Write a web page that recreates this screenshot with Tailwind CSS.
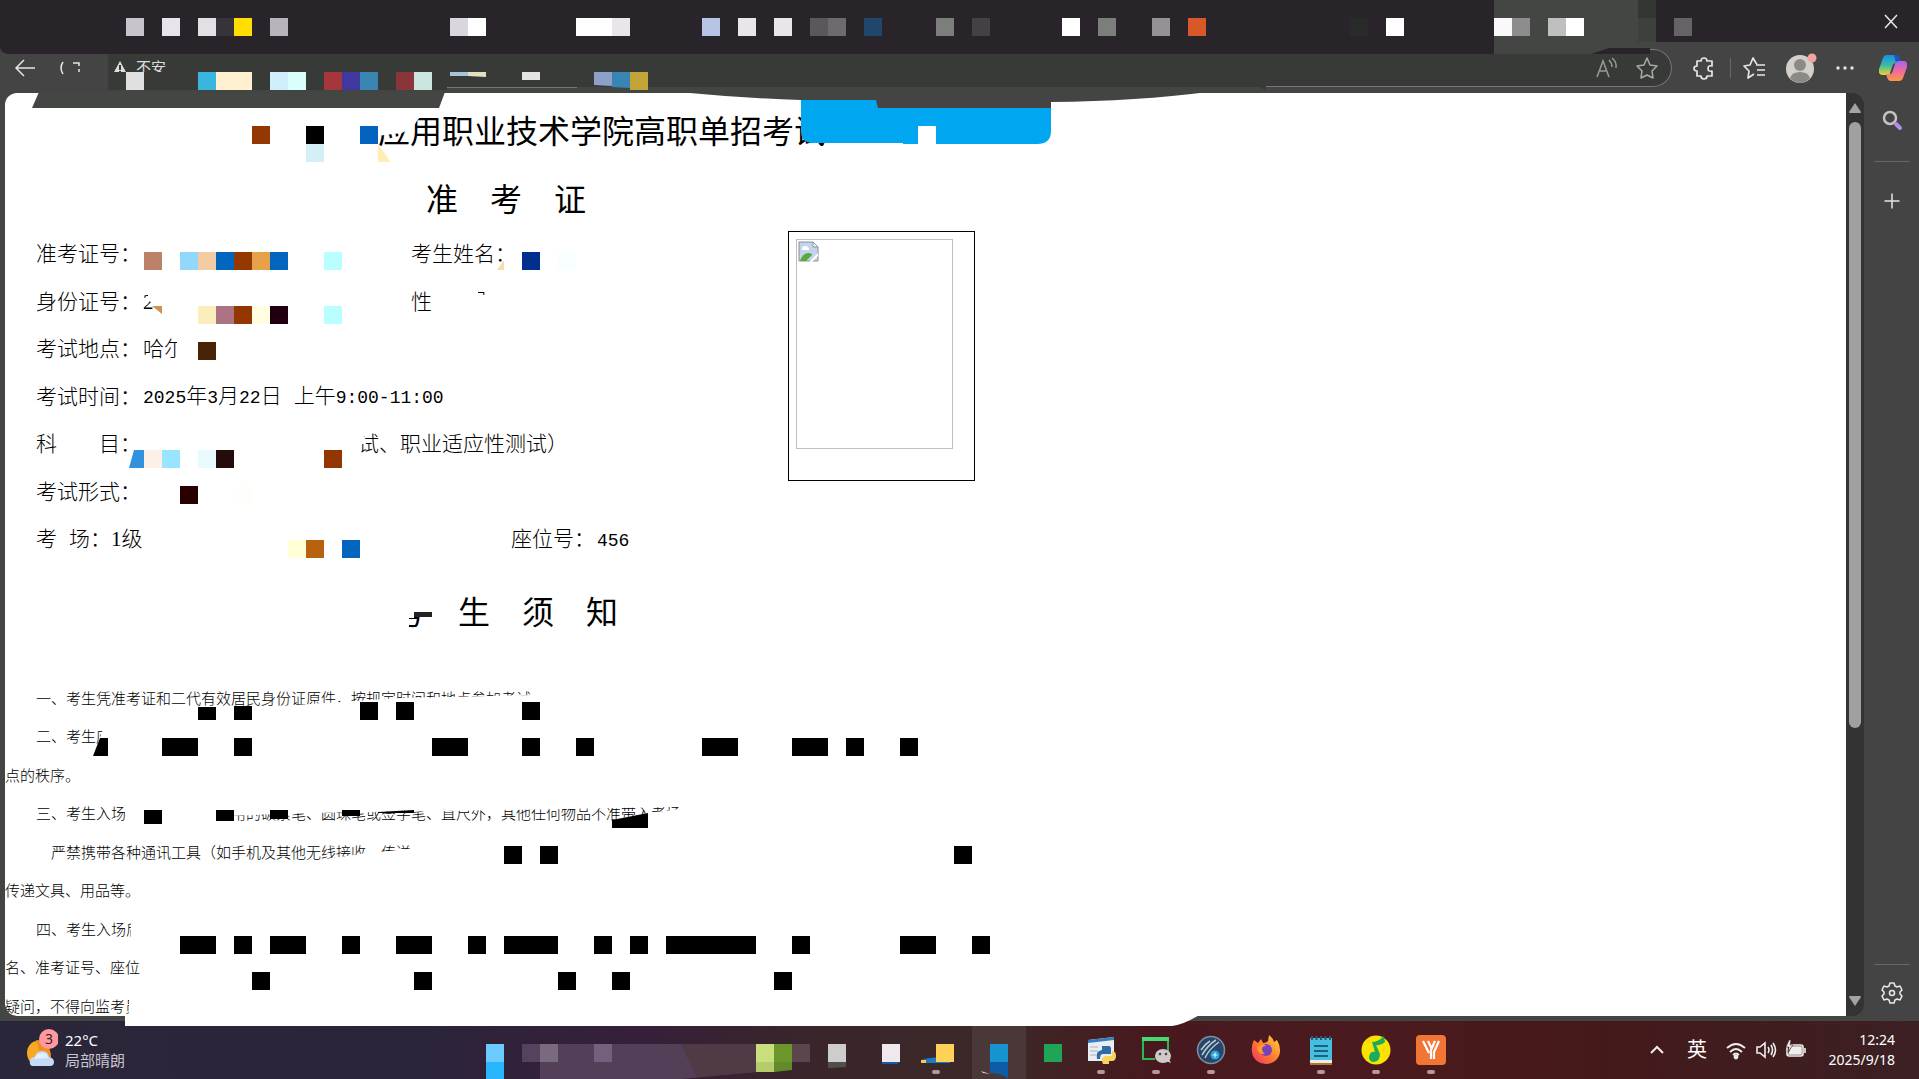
<!DOCTYPE html>
<html lang="zh-CN">
<head>
  <meta charset="UTF-8" />
  <meta name="viewport" content="width=device-width, initial-scale=1.0"/>
  <title>准考证</title>
  <script src="https://cdn.jsdelivr.net/npm/@tailwindcss/browser@4"></script>
</head>
<body class="relative flex flex-col h-screen overflow-hidden bg-[#444444] font-['Noto_Sans','Noto_Sans_CJK_SC',sans-serif]">

  <!-- Tab strip -->
  <header class="flex shrink-0 h-[42px] bg-[#29242a]">
    <div class="flex-1"></div>
    <button class="w-[68px] h-[42px] pr-[13px] pt-[2px] flex items-center justify-end text-[#e8e8e8]" aria-label="关闭">
      <svg class="w-8 h-8" viewBox="0 0 32 32" fill="none" stroke="currentColor" stroke-width="1.5"><path d="M11 9l12 13M23 9L11 22"/></svg>
    </button>
  </header>

  <!-- Toolbar -->
  <nav class="flex shrink-0 items-center h-[51px] pl-3 bg-[#444444] text-[#e6e6e6]">
    <button class="w-7" aria-label="返回">
      <svg class="w-7 h-6" viewBox="0 0 28 24" fill="none" stroke="currentColor" stroke-width="1.5"><path d="M23 12H4M12 4l-8 8 8 8"/></svg>
    </button>
    <button class="ml-4 w-8" aria-label="刷新">
      <svg class="w-8 h-6" viewBox="0 0 32 24" fill="none" stroke="currentColor" stroke-width="1.5"><path d="M7 6q-4 6 0 12M17 7h6v3M23 13v3"/></svg>
    </button>
    <div class="flex flex-1 items-center h-[38px] ml-5 rounded-r-full border border-[#777] border-l-0 bg-[#383a38]">
      <button class="flex items-center h-full pl-1 text-[15px] text-[#dddddd]">
        <svg class="w-4 h-4 mr-2" viewBox="0 0 16 16"><path d="M8 1l7 13H1z" fill="#ddd"/><path d="M8 5v5M8 11v2" stroke="#383a38" stroke-width="2"/></svg>不安
      </button>
      <input type="text" class="flex-1 h-full bg-transparent outline-none" aria-label="地址栏"/>
      <button class="w-8 text-[#999]" aria-label="大声朗读">
        <svg class="w-6 h-6" viewBox="0 0 24 24" fill="none" stroke="currentColor" stroke-width="1.5"><path d="M2 21L8 5l6 16M4 15h8M14 4q3 3 3 7M17 2q5 4 4 10"/></svg>
      </button>
      <button class="ml-2 mr-2 w-7 text-[#aaa]" aria-label="收藏">
        <svg class="w-6 h-6" viewBox="0 0 24 24" fill="none" stroke="currentColor" stroke-width="1.5" stroke-linejoin="round"><path d="M12 2l3 7 7 1-5 5 1 7-6-3-6 3 1-7-5-5 7-1z"/></svg>
      </button>
    </div>
    <button class="ml-5 w-6" aria-label="扩展">
      <svg class="w-6 h-6" viewBox="0 0 24 24" fill="none" stroke="currentColor" stroke-width="1.7" stroke-linejoin="round"><path d="M5 5h4q0-3 3-3t3 3h5v5q-4-1-4 2.500t4 2.500v5h-5q0 3-3 3t-3-3H5v-5q-3 0-3-2.500T5 10z"/></svg>
    </button>
    <span class="ml-[14px] mr-3 h-5 w-px bg-[#686868]"></span>
    <button class="w-6" aria-label="收藏夹">
      <svg class="w-6 h-6" viewBox="0 0 24 24" fill="none" stroke="currentColor" stroke-width="1.7" stroke-linejoin="round"><path d="M14 8l-1-1-3-5-3 7-6 1 5 5-1 7 6-4M13 9h9M14 14h8M14 19h8"/></svg>
    </button>
    <button class="ml-[18px] w-8" aria-label="个人资料">
      <svg class="w-8 h-8" viewBox="0 0 32 32"><circle cx="15" cy="17" r="14" fill="#d3d0cc"/><circle cx="15" cy="13" r="6" fill="#8d8985"/><path d="M5 26q2-6 10-6t10 6q-4 5-10 5T5 26z" fill="#8d8985"/><circle cx="27" cy="6" r="4.500" fill="#f0a5a0"/></svg>
    </button>
    <button class="ml-[18px] w-8" aria-label="设置及其他">
      <svg class="w-6 h-6" viewBox="0 0 24 24" fill="currentColor"><circle cx="3" cy="12" r="1.700"/><circle cx="10" cy="12" r="1.700"/><circle cx="17" cy="12" r="1.700"/></svg>
    </button>
    <button class="ml-3 mr-3 w-7" aria-label="Copilot">
      <svg class="w-7 h-7" viewBox="0 0 28 28">
        <defs>
          <linearGradient id="cl" x1="0" y1="0" x2="0" y2="1"><stop offset="0" stop-color="#1c8fe8"/><stop offset=".5" stop-color="#38b9a8"/><stop offset="1" stop-color="#f0d32a"/></linearGradient>
          <linearGradient id="cr" x1="0" y1="0" x2="0" y2="1"><stop offset="0" stop-color="#a565ee"/><stop offset=".5" stop-color="#ee6a9c"/><stop offset="1" stop-color="#fb9a42"/></linearGradient>
        </defs>
        <path d="M8 1h8q3 0 4 4l1 4h-4q-3 0-4 4l-2 6q0 2-3 2H3q-4 0-3-6L4 4q1-3 4-3z" fill="url(#cl)"/>
        <path d="M15 1h2q3 0 4 4l1 4h-5z" fill="#1557c8"/>
        <path d="M20 27h-8q-3 0-4-4l-1-3h4q2 0 3-4l2-6q1-3 4-3h5q4 0 3 6l-4 11q-1 3-4 3z" fill="url(#cr)"/>
      </svg>
    </button>
  </nav>

  <div class="flex flex-1 min-h-0 pl-[5px] pb-[5px]">
    <!-- Page -->
    <main class="flex-1 overflow-hidden bg-white text-black rounded-l-xl font-['Liberation_Serif','Noto_Sans_CJK_SC',serif]">
      <h1 class="mt-[23px] pl-[373px] text-[32px] leading-[32px] font-normal whitespace-nowrap">应用职业技术学院高职单招考试</h1>
      <h2 class="mt-9 w-[1002px] text-center text-[32px] leading-[32px] font-normal">准　考　证</h2>

      <div class="flex mt-[15px]">
        <dl class="grid grid-rows-7 w-[783px] h-[333px] pl-[31px] text-[21px] font-light whitespace-nowrap items-center">
          <div class="grid grid-cols-[375px_1fr]"><dt>准考证号：</dt><dt>考生姓名：</dt></div>
          <div class="grid grid-cols-[107px_268px_1fr]"><dt>身份证号：</dt><dd>2</dd><dt>性　　别：</dt></div>
          <div class="grid grid-cols-[107px_1fr]"><dt>考试地点：</dt><dd>哈尔</dd></div>
          <div class="grid grid-cols-[107px_1fr]">
            <dt>考试时间：</dt>
            <dd class="flex gap-3 text-[18px] font-['Liberation_Mono','Noto_Sans_CJK_SC',monospace]">
              <span>2025<span class="text-[21px]">年</span>3<span class="text-[21px]">月</span>22<span class="text-[21px]">日</span></span>
              <span><span class="text-[21px]">上午</span>9:00-11:00</span>
            </dd>
          </div>
          <div class="grid grid-cols-[322px_1fr]"><dt>科　　目：</dt><dd>试、职业适应性测试）</dd></div>
          <div><dt>考试形式：</dt></div>
          <div class="grid grid-cols-[33px_42px_400px_86px_1fr] items-baseline"><dt>考</dt><dt>场：</dt><dd>1级</dd><dt>座位号：</dt><dd class="text-[18px] font-['Liberation_Mono',monospace]">456</dd></div>
        </dl>
        <figure class="w-[187px] h-[250px] p-[7px] border border-black">
          <div class="w-[157px] h-[210px] border border-[#c0c0c0]">
            <svg class="w-6 h-6" viewBox="0 0 24 24"><path d="M2 2h14l5 5v14H2z" fill="#c3d3ee" stroke="#8b9096"/><path d="M16 2v5h5z" fill="#fff" stroke="#8b9096"/><path d="M5 9q0-3 3-3 4 0 4 4H5z" fill="#fff"/><path d="M3 21q3-8 8-8 4 0 4 2l-6 6z" fill="#55ac3a"/><path d="M12 22l9-9v3l-6 6z" fill="#fff"/></svg>
          </div>
        </figure>
      </div>

      <h2 class="mt-[33px] w-[1002px] text-center text-[32px] leading-[32px] font-normal">考　生　须　知</h2>

      <section class="grid grid-rows-9 items-center h-[346px] mt-[51px] text-[15px] font-light whitespace-nowrap">
        <p class="pl-[31px]">一、考生凭准考证和二代有效居民身份证原件，按规定时间和地点参加考试</p>
        <p class="pl-[31px]">二、考生应</p>
        <p>点的秩序。</p>
        <p class="pl-[31px]">三、考生入场时，除携带书写用的碳素笔、圆珠笔或签字笔、直尺外，其他任何物品不准带入考场</p>
        <p class="pl-[46px]">严禁携带各种通讯工具（如手机及其他无线接收、传送</p>
        <p>传递文具、用品等。</p>
        <p class="pl-[31px]">四、考生入场后</p>
        <p>名、准考证号、座位</p>
        <p>疑问，不得向监考员</p>
      </section>
    </main>

    <!-- Scrollbar -->
    <div class="flex flex-col items-center w-[18px] py-[9px] bg-[#333333] rounded-r-xl">
      <svg class="w-[14px] h-3" viewBox="0 0 14 12"><path d="M7 1l6 9q0 1-1 1H2q-1 0-1-1z" fill="#a3a3a3"/></svg>
      <div class="w-3 h-[606px] mt-2 rounded-full bg-[#a0a0a0]"></div>
      <svg class="w-[14px] h-3 mt-auto" viewBox="0 0 14 12"><path d="M7 11l6-9q0-1-1-1H2Q1 1 1 2z" fill="#a3a3a3"/></svg>
    </div>

    <!-- Sidebar -->
    <aside class="flex flex-col items-center w-[55px] pt-4 pb-[11px] text-[#e6e6e6]">
      <button aria-label="搜索">
        <svg class="w-6 h-6" viewBox="0 0 24 24" fill="none"><circle cx="10" cy="9" r="6" stroke="#c3c3c6" stroke-width="2.500"/><path d="M16 15l4 4" stroke="#b58be8" stroke-width="4" stroke-linecap="round"/></svg>
      </button>
      <hr class="w-9 mt-7 border-[#666]"/>
      <button class="mt-[27px]" aria-label="自定义">
        <svg class="w-6 h-6" viewBox="0 0 24 24" fill="none" stroke="currentColor" stroke-width="1.500"><path d="M12 4.500v15M4.500 12h15"/></svg>
      </button>
      <hr class="w-9 mt-auto border-[#666]"/>
      <button class="mt-4" aria-label="设置">
        <svg class="w-6 h-6" viewBox="0 0 24 24" fill="none" stroke="currentColor" stroke-width="1.600" stroke-linejoin="round"><path d="M10 2h4l1 3 2 1 3-1 2 4-2 2v2l2 2-2 4-3-1-2 1-1 3h-4l-1-3-2-1-3 1-2-4 2-2v-2L2 9l2-4 3 1 2-1z"/><circle cx="12" cy="12" r="2.500"/></svg>
      </button>
    </aside>
  </div>

  <!-- Taskbar -->
  <footer class="relative flex shrink-0 items-center h-[58px] text-white bg-[linear-gradient(90deg,#2a2639_0%,#2b2439_22%,#351f3a_33%,#3a2629_43%,#3d2829_52%,#47191e_60%,#4b1a1e_72%,#46191a_82%,#3b2023_100%)]">
    <button class="flex items-center gap-2 ml-6 text-left text-[15px] leading-5">
      <svg class="w-[34px] h-11" viewBox="0 0 34 44">
        <path d="M13 13a10 12 0 1 0 4 23l10-10z" fill="#f8a823"/><path d="M12 12q14 0 15 17l-8 5z" fill="#f08e24"/>
        <path d="M8 38q-3-1-2-6 1-3 5-3 1-6 7-6t7 6q5 1 5 5t-4 4z" fill="#c4daf7"/><path d="M10 31q2-6 8-6 5 0 6 5z" fill="#e2effc"/>
        <ellipse cx="25" cy="11" rx="10" ry="10" fill="#ff999e"/><text x="25" y="16" font-size="14" text-anchor="middle" fill="#33222b">3</text>
      </svg>
      <span class="-ml-px">22°C<br/><span class="text-[#c9c5d0]">局部晴朗</span></span>
    </button>

    <div class="flex items-center gap-[23px] ml-auto mr-[198px]">
      <button aria-label="Python"><svg class="w-8 h-8" viewBox="0 0 32 32"><path d="M3 6l26-3v19l-8 5H3z" fill="#e9edf4"/><path d="M3 6l26-3v3L3 9z" fill="#367dbd"/><path d="M5 13h8M5 17h8M5 21h6" stroke="#a9b3bf"/><path d="M17 12h7q2 0 2 3v5h-8q-3 0-3 5h-3q-2-8 5-9z" fill="#2f6ca1"/><path d="M27 17q4 0 4 5t-4 5h-3v3h-6q-3-6 2-8h7z" fill="#fbd35b"/></svg></button>
      <button aria-label="微信"><svg class="w-8 h-8" viewBox="0 0 32 32"><path d="M15 25H3V5h25v12" fill="none" stroke="#27b953" stroke-width="2"/><path d="M2 5h27" stroke="#44da70" stroke-width="4"/><ellipse cx="23" cy="22" rx="8" ry="7" fill="#cfcac8"/><path d="M26 27l5 2-2-4z" fill="#cfcac8"/><circle cx="20" cy="20" r="1.300" fill="#444"/><circle cx="26" cy="20" r="1.300" fill="#444"/></svg></button>
      <button aria-label="Navicat"><svg class="w-8 h-8" viewBox="0 0 32 32"><circle cx="16" cy="16" r="13.500" fill="#284768" stroke="#7891a5" stroke-width="1.500"/><path d="M7 21Q13 11 21 6M10 24Q14 15 24 8M6 16q4-6 9-9" fill="none" stroke="#b8cbd8" stroke-width="1.500"/><circle cx="20" cy="21" r="4.500" fill="#24a6dc"/><path d="M20 18.500v5M17.500 21h5" stroke="#d8f5ff" stroke-width="1.200"/></svg></button>
      <button aria-label="Firefox"><svg class="w-8 h-8" viewBox="0 0 32 32"><defs><linearGradient id="ff" x1="1" y1="0" x2="0" y2="1"><stop offset="0" stop-color="#ffd83d"/><stop offset=".5" stop-color="#ff7d2d"/><stop offset="1" stop-color="#ef2e68"/></linearGradient></defs><path d="M4 6l4 3 3-4 2 4q3 0 5-2l1-6q4 3 5 7l3-2q3 5 3 10a14 13 0 0 1-28 2Q1 11 4 6z" fill="url(#ff)"/><circle cx="16" cy="16" r="6" fill="#7742bd"/><path d="M7 13q6-5 9-1-4 0-4 3t3 5q-7 1-8-7z" fill="#ff9b28"/></svg></button>
      <button aria-label="记事本"><svg class="w-8 h-8" viewBox="0 0 32 32"><path d="M5 4h22v23H5z" fill="#47bde0"/><path d="M5 26h22v3H5z" fill="#f1ece0"/><path d="M5 29h22v2H5z" fill="#a77a32"/><path d="M9 12h14M9 17h14M9 22h14" stroke="#17647f" stroke-width="2"/><path d="M7 2v4M11.500 2v4M16 2v4M20.500 2v4M25 2v4" stroke="#285a70" stroke-width="2"/></svg></button>
      <button aria-label="QQ音乐"><svg class="w-8 h-8" viewBox="0 0 32 32"><circle cx="16" cy="16" r="14.500" fill="#fbe200"/><path d="M12 8q6 0 12-6l1 6q-4 4-9 3l4 9q0 7-6 8-5 0-5-5 1-6 6-5z" fill="#19ad5b"/></svg></button>
      <button aria-label="VeryPDF"><svg class="w-8 h-8" viewBox="0 0 32 32"><rect x="1" y="1" width="30" height="30" rx="4" fill="#f17636"/><path d="M8 7l6 12M13 7l4 8M20 7l-4 9v9M24 7l-5 11v7" stroke="#fff" stroke-width="2.200" fill="none"/></svg></button>
    </div>

    <div class="flex items-center mr-6">
      <button class="w-6" aria-label="显示隐藏的图标"><svg class="w-6 h-6" viewBox="0 0 24 24" fill="none" stroke="#eee" stroke-width="2"><path d="M6 15l6-6 6 6"/></svg></button>
      <button class="ml-4 w-6 text-[20px] leading-6">英</button>
      <button class="flex gap-2 ml-4" aria-label="网络、音量和电池">
        <svg class="w-[22px] h-6" viewBox="0 0 22 24" fill="none" stroke="#eee" stroke-width="1.800"><path d="M2 10q9-8 18 0M5 14q6-6 12 0M8 17q3-3 6 0"/><circle cx="11" cy="19" r="1.500" fill="#eee"/></svg>
        <svg class="w-[22px] h-6" viewBox="0 0 22 24" fill="none" stroke="#eee" stroke-width="1.600"><path d="M2 9h3l5-4v14l-5-4H2zM13 9q2 3 0 6M16 7q3 5 0 10M18 5q5 7 0 14"/></svg>
        <svg class="w-[22px] h-6" viewBox="0 0 22 24" fill="none" stroke="#eee" stroke-width="1.600"><rect x="2" y="7" width="16" height="11" rx="2"/><path d="M7 9h9v7H4z" fill="#eee"/><path d="M20 10v5"/><path d="M4 2l-3 7h3l-1 5 5-7H5l1-5z" fill="#eee" stroke="#41201f" stroke-width=".6"/></svg>
      </button>
      <time class="w-[88px] text-right text-[14px] leading-5">12:24<br/>2025/9/18</time>
    </div>
  </footer>

  <!-- Mosaic layer -->
  <svg class="absolute inset-0 w-full h-full pointer-events-none" aria-hidden="true">
    <!-- tab strip and toolbar edges -->
    <path d="M0 42h1650v12H10Q2 54 0 48z" fill="#29242a"/>
    <path d="M1494 0h144v42h16l5 6h-50l-18 6h-97z" fill="#444644"/>
    <path d="M1638 0h18v18h-18z" fill="#333633"/><path d="M1638 18h18v24h-18z" fill="#3d403d"/>
    <path d="M108 72h1158v18H108z" fill="#383a38"/>
    <path d="M108 90h339v-3h113l700 0 10 6H5v-3z" fill="#434543"/>
    <path d="M447 87.500h130" stroke="#777"/>
    <path d="M801 99h250v32q0 13-14 13H903v-1h-90q-12 0-12-12z" fill="#00a6f0"/>
    <path d="M39 92h406l-6 16H32z" fill="#444644"/>
    <path d="M678 92h530q-70 9-157 10v6H878l-2-8h-75q-60-2-123-8z" fill="#444444"/>
    <!-- covered text -->
    <g fill="#fff">
      <path d="M918 126h18v18h-18zM376 110h55q-12 5-17 16l-12 7-26 3z"/>
      <path d="M390 594h60v18h-36v6h-5v10h-19z"/>
      <path d="M148 290h24v11l-12 8-12-9zM454 295h80v25h-80zM432 286h46v34h-46zM487 286h45v34h-45zM177 338h14v28h-14z"/>
      <path d="M354 434h10v10h-6v16h-4z"/>
      <path d="M252 708l88-6 60-4 132-3v18H252z"/>
      <path d="M104 726l-8 24h20v-24z"/>
      <path d="M125 804h110v22H125zM230 800h440v7l-225 4-145 2-70 3zM612 820l36-7 46-6v20h-82z"/>
      <path d="M312 861l28-4 26-4v-10h14v9l36-4v16H312z"/>
      <path d="M131 918h16v26h-16zM129 996h18v30h-18z"/>
    </g>
    <path d="M5 1005q2 10 11 11h110v5H0v-16z" fill="#444644"/>
    <path d="M125 1014h1076q-18 11-29 12H125z" fill="#fff"/>
    <path d="M378 144l13 18h-13z" fill="#ffeeb4"/>
    <path d="M504 260v10h-7z" fill="#f9dcb0"/>
    <path d="M152 306h10v8z" fill="#cd934f"/>
    <path d="M134 450h10v18h-15z" fill="#3292dd"/>
    <path d="M100 738h8v18H93zM612 820l36-7v15h-36zM198 707h18v13h-18zM234 706h18v14h-18z"/>
    <path d="M144 810h18v14h-18zM216 810h18v11h-18zM270 810h18v9h-18zM342 810h18v6h-18zM378 812l36-2v3h-36z"/>
    <path d="M414 612h18v5h-18z" fill="#222"/>
    <path d="M450 72h18v4h-18z" fill="#a4c6d8"/><path d="M468 72h18v5l-18-1z" fill="#e0e1c3"/>
    <path d="M522 72h18v8h-18z" fill="#e4e5e0"/>
    <path d="M594 72h18v14l-18-1z" fill="#8da1c8"/><path d="M612 72h18v16l-18-1z" fill="#3885b3"/>
    <!-- taskbar smears -->
    <path d="M540 1044h216v28l-75 7H540z" fill="#543f58"/>
    <path d="M681 1044h75v28l-60 5z" fill="#503a45"/>
    <path d="M972 1026h54v53h-54z" fill="#4a3839"/>
    <path d="M756 1062h18v10h-18z" fill="#b5cb6c"/><path d="M774 1062h18v8l-18 2z" fill="#628a29"/>
    <path d="M828 1062h18v5l-18 1z" fill="#4e504c"/><path d="M882 1062h18l-3 2h-15z" fill="#145ba8"/>
    <path d="M921 1060q14-5 29 0v3h-29z" fill="#197cc5"/><path d="M921 1060h5v3h-5z" fill="#ffc646"/>
    <path d="M990 1062h18v17q-6-6-18-6z" fill="#0e5ca6"/><path d="M981 1071l9 3-7-1z" fill="#f5c5cc"/>
    <g id="tiles" shape-rendering="crispEdges"></g>
    <g fill="#b5989b"><rect x="932" y="1070" width="8" height="4" rx="2"/><rect x="1097" y="1070" width="8" height="4" rx="2"/><rect x="1152" y="1070" width="8" height="4" rx="2"/><rect x="1207" y="1070" width="8" height="4" rx="2"/><rect x="1317" y="1070" width="8" height="4" rx="2"/><rect x="1372" y="1070" width="8" height="4" rx="2"/><rect x="1427" y="1070" width="8" height="4" rx="2"/></g>
  </svg>

  <script>
    // row y -> [x, colour, tiles wide]
    const rows = {
      18: [[126,"#c8c4cb"],[162,"#e8e4eb"],[198,"#e2dfe5"],[216,"#37333a"],[234,"#ffdf00"],[270,"#b8b4bb"],[450,"#dad6de"],[468,"#fff"],[576,"#fff",2],[612,"#e8e5eb"],[702,"#b8c4e6"],[738,"#e8e5eb"],[774,"#e8e5eb"],[810,"#5b575d"],[828,"#6e6a70"],[864,"#20466c"],[936,"#7c7e7b"],[972,"#434143"],[1062,"#fff"],[1098,"#7c7e7b"],[1152,"#959197"],[1188,"#d85827"],[1350,"#292b2a"],[1386,"#fff"],[1494,"#faf8fb"],[1512,"#8d8d8d"],[1548,"#bfbfbf"],[1566,"#fff"],[1674,"#666367"]],
      72: [[126,"#e0e0e0"],[198,"#39b6de"],[216,"#fff1d0",2],[270,"#d0effb"],[288,"#d9fffd"],[324,"#a5363c"],[342,"#3e389f"],[360,"#3885b1"],[396,"#8a343b"],[414,"#c9e5de"],[630,"#c2a337"]],
      126: [[252,"#933800"],[306,"#000"],[360,"#0364bf"]],
      144: [[306,"#d5eff7"]],
      252: [[144,"#bc8169"],[180,"#92d8fd"],[198,"#f4cba2"],[216,"#0366be"],[234,"#943800"],[252,"#e7a249"],[270,"#0366be"],[324,"#baffff"],[522,"#002f8e"],[558,"#f9feff"]],
      306: [[198,"#fbeebb"],[216,"#ab7384"],[234,"#933600"],[252,"#fffee0"],[270,"#200010"],[324,"#b9ffff"]],
      342: [[198,"#482305"]],
      450: [[144,"#fdf0e6"],[162,"#98e5ff"],[198,"#e9faff"],[216,"#260b0b"],[324,"#933500"]],
      486: [[180,"#290000"],[234,"#fffefa"]],
      540: [[288,"#ffffd8"],[306,"#b8610f"],[342,"#0365bd"]],
      702: [[360,"#000"],[396,"#000"],[522,"#000"]],
      738: [[162,"#000",2],[234,"#000"],[432,"#000",2],[522,"#000"],[576,"#000"],[702,"#000",2],[792,"#000",2],[846,"#000"],[900,"#000"]],
      846: [[504,"#000"],[540,"#000"],[954,"#000"]],
      936: [[180,"#000",2],[234,"#000"],[270,"#000",2],[342,"#000"],[396,"#000",2],[468,"#000"],[504,"#000",3],[594,"#000"],[630,"#000"],[666,"#000",5],[792,"#000"],[900,"#000",2],[972,"#000"]],
      972: [[252,"#000"],[414,"#000"],[558,"#000"],[612,"#000"],[774,"#000"]],
      1044: [[486,"#6bcbff"],[522,"#55425f"],[540,"#7a6a80"],[594,"#745f7c"],[756,"#c8e07c"],[774,"#6c9629"],[792,"#5b464d"],[828,"#cdcdcd"],[882,"#efe9ef"],[936,"#ffd257"],[990,"#1793d0"],[1044,"#20a556"]],
      1062: [[486,"#29b6ff"]],
    };
    const tiles = document.getElementById("tiles");
    for (const y in rows) {
      for (const [x, fill, n = 1] of rows[y]) {
        const r = document.createElementNS("http://www.w3.org/2000/svg", "rect");
        r.setAttribute("x", x);
        r.setAttribute("y", y);
        r.setAttribute("width", 18 * n);
        r.setAttribute("height", 18);
        r.setAttribute("fill", fill);
        tiles.appendChild(r);
      }
    }
  </script>
</body>
</html>
